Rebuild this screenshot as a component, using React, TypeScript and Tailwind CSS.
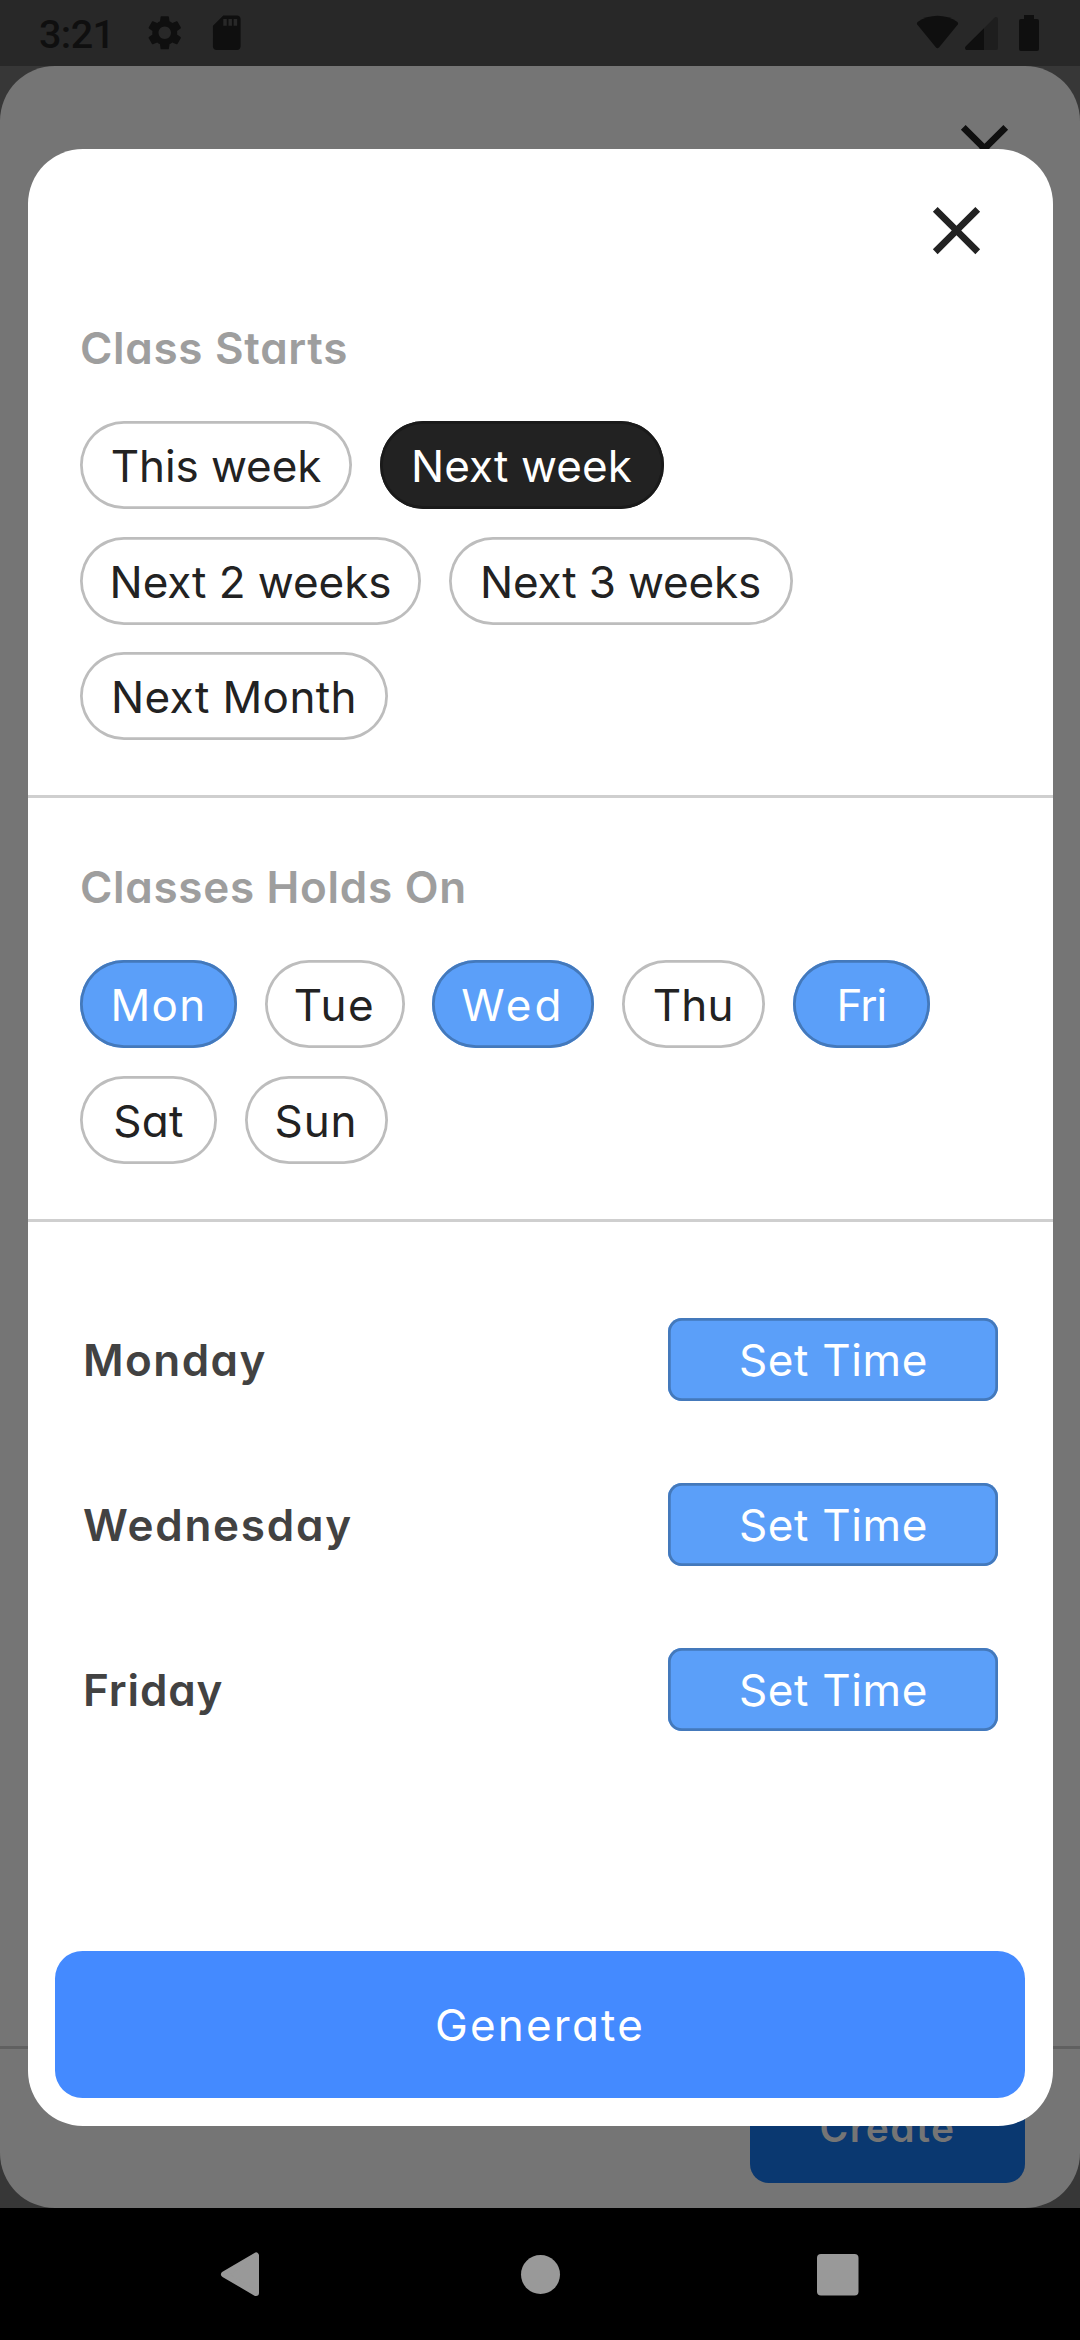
import { MdClose, MdSdCard, MdSettings } from "react-icons/md";

type ChipData = { label: string; box: string; track: string; tone?: "dark" | "blue" };

const starts: ChipData[] = [
  { label: "This week", box: "w-[272px]", track: "tracking-[-0.08px]" },
  { label: "Next week", box: "w-[284px]", track: "tracking-[0.11px]", tone: "dark" },
  { label: "Next 2 weeks", box: "w-[341px]", track: "tracking-[-0.06px]" },
  { label: "Next 3 weeks", box: "w-[344px]", track: "tracking-[-0.16px]" },
  { label: "Next Month", box: "w-[308px]", track: "tracking-[0.4px]" },
];

const days: ChipData[] = [
  { label: "Mon", box: "w-[157px]", track: "tracking-[1.3px]", tone: "blue" },
  { label: "Tue", box: "w-[140px]", track: "tracking-[1.5px]" },
  { label: "Wed", box: "w-[162px]", track: "tracking-[3.2px]", tone: "blue" },
  { label: "Thu", box: "w-[143.5px]", track: "tracking-[0.25px]" },
  { label: "Fri", box: "w-[137.5px]", track: "tracking-[-1px]", tone: "blue" },
  { label: "Sat", box: "w-[137px]", track: "tracking-[0.3px]" },
  { label: "Sun", box: "w-[143px]", track: "tracking-[0.9px]" },
];

const times = [
  { label: "Monday", track: "tracking-[1.46px]" },
  { label: "Wednesday", track: "tracking-[1.75px]" },
  { label: "Friday", track: "tracking-[0.87px]" },
];

const tones = {
  plain: "text-[#222222] shadow-[inset_0_0_0_2.75px_#bdbdbd]",
  dark: "bg-[#222222] text-white shadow-[inset_0_0_0_2.75px_#1a1a1a]",
  blue: "bg-[#5b9ff9] text-white shadow-[inset_0_0_0_2.75px_#4479bb]",
};

function Chip({ label, box, track, tone }: ChipData) {
  return (
    <button
      className={`flex h-[88px] shrink-0 items-center justify-center rounded-full pt-[2px] whitespace-nowrap ${box} ${track} ${tones[tone ?? "plain"]}`}
    >
      {label}
    </button>
  );
}

function Section({ title, track, chips, top }: { title: string; track: string; chips: ChipData[]; top: string }) {
  return (
    <section className={`border-b-[3px] border-[#cfcfcf] pr-[50px] pb-[55px] pl-[52.5px] ${top}`}>
      <h2 className={`leading-[60px] font-semibold text-[#9e9e9e] ${track}`}>{title}</h2>
      <div className="mt-[43px] flex flex-wrap gap-[27.5px]">
        {chips.map((c) => (
          <Chip key={c.label} {...c} />
        ))}
      </div>
    </section>
  );
}

function StatusBar() {
  return (
    <header className="flex h-[66px] items-center bg-[#282828] pl-[38px] text-[#0f0f0f]">
      <span className="w-[106px] pt-[3px] pl-px font-[Roboto] text-[39.5px] font-medium tracking-[-0.6px]">3:21</span>
      <MdSettings className="size-[41.5px]" />
      <MdSdCard className="ml-[20px] size-[41.5px]" />
      <svg className="ml-auto h-[66px] w-[140px]" viewBox="910 0 140 66" fill="currentColor">
        <path d="M917.2 24.6a2.2 2.2 0 0 1 .3-2.6C929 13.5 946 13.5 957.5 22a2.2 2.2 0 0 1 .3 2.6L939.2 47.3a2.2 2.2 0 0 1-3.4 0z" />
        <path d="M994.6 17.6 965.7 46.5c-1.3 1.3-.4 3.5 1.4 3.5H996a2 2 0 0 0 2-2V19c0-1.8-2.1-2.7-3.4-1.4z" fill="#1e1e1e" />
        <path d="M984 28.2 965.7 46.5c-1.3 1.3-.4 3.5 1.4 3.5H984z" />
        <path d="M1024 15h10v4h3a2 2 0 0 1 2 2v28a2 2 0 0 1-2 2h-16a2 2 0 0 1-2-2V21a2 2 0 0 1 2-2h3z" />
      </svg>
      <span className="w-[30px]" />
    </header>
  );
}

function BackSheet() {
  return (
    <div className="h-[2142px] bg-[#373737]">
      <div className="flex h-full flex-col rounded-[55px] bg-[#757575]">
        <div className="flex h-[123px] items-end justify-end pr-[55.5px]">
          <MdClose className="size-[81px] text-[#0f0f0f]" />
        </div>
        <div className="mt-auto flex h-[162px] justify-end border-t-[3px] border-[#606060] pt-[24px] pr-[55px]">
          <button className="flex h-[110px] w-[275px] items-center justify-center rounded-[19px] bg-[#0a3870] pb-px text-[39px] font-semibold tracking-[1.5px] text-[#757575]">
            Create
          </button>
        </div>
      </div>
    </div>
  );
}

function Dialog() {
  return (
    <div className="absolute top-[148.5px] left-[27.5px] flex h-[1977px] w-[1025px] flex-col rounded-[55px] bg-white">
      <div className="flex h-[122px] shrink-0 items-end justify-end pr-[55.5px]">
        <button aria-label="Close">
          <MdClose className="size-[81px] text-[#222222]" />
        </button>
      </div>
      <Section title="Class Starts" track="tracking-[0.7px]" chips={starts} top="pt-[47.5px]" />
      <Section title="Classes Holds On" track="tracking-[0.7px]" chips={days} top="pt-[59px]" />
      <div className="flex flex-col gap-[82px] pt-[96px] pr-[54.5px] pl-[55.5px]">
        {times.map((t) => (
          <div key={t.label} className="flex h-[83px] items-center justify-between">
            <span className={`pt-[2px] font-semibold text-[#424242] ${t.track}`}>{t.label}</span>
            <button className="flex h-full w-[330px] items-center justify-center rounded-[14px] bg-[#5b9ff9] pt-[2px] pl-px tracking-[0.65px] text-white shadow-[inset_0_0_0_2.75px_#4479bb]">
              Set Time
            </button>
          </div>
        ))}
      </div>
      <button className="mx-[27.5px] mt-auto mb-[27.5px] flex h-[147.5px] shrink-0 items-center justify-center rounded-[27.5px] bg-[#448aff] pt-[2px] tracking-[2.2px] text-white">
        Generate
      </button>
    </div>
  );
}

function NavBar() {
  return (
    <nav className="h-[132px] bg-black">
      <svg className="block h-[132px] w-full" viewBox="0 2208 1080 132" fill="#999999">
        <path d="M224 2274.3 256 2255.5v37.6z" stroke="#999999" strokeWidth="6" strokeLinejoin="round" />
        <circle cx="540.5" cy="2274.5" r="19.5" />
        <rect x="817" y="2254" width="41.5" height="41.5" rx="4" />
      </svg>
    </nav>
  );
}

export default function App() {
  return (
    <div className="relative h-[2340px] w-[1080px] overflow-hidden bg-black font-[Inter,sans-serif] text-[44px] leading-[60px] [font-feature-settings:'cv11']">
      <StatusBar />
      <BackSheet />
      <NavBar />
      <Dialog />
    </div>
  );
}
